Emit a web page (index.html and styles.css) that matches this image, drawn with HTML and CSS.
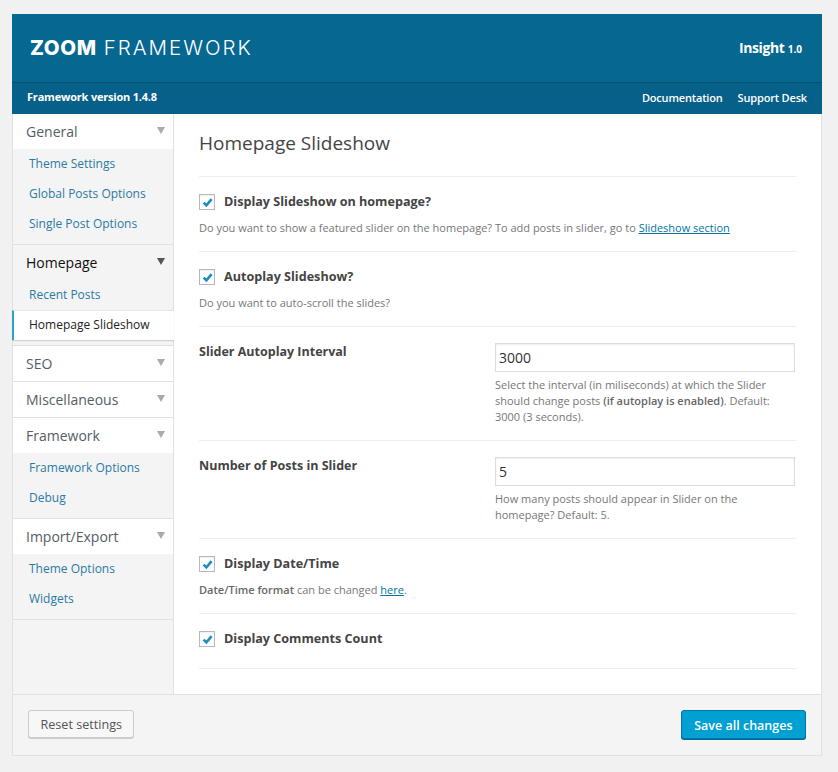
FILE: index.html
```html
<!DOCTYPE html>
<html lang="en">
<head>
<meta charset="utf-8">
<title>ZOOM Framework</title>
<link rel="stylesheet" href="styles.css">
</head>
<body>
<div class="panel">
  <header class="masthead">
    <div class="logo"><b>ZOOM</b> <span>FRAMEWORK</span></div>
    <div class="theme">Insight <small>1.0</small></div>
  </header>
  <div class="subbar">
    <span class="version">Framework version 1.4.8</span>
    <nav class="links"><a>Documentation</a><a>Support Desk</a></nav>
  </div>
  <div class="body">
    <aside class="side">
      <section class="group">
        <h3 class="ghead">General<i class="arrow"></i></h3>
        <ul class="sub">
          <li>Theme Settings</li>
          <li>Global Posts Options</li>
          <li>Single Post Options</li>
        </ul>
      </section>
      <section class="group open">
        <h3 class="ghead">Homepage<i class="arrow"></i></h3>
        <ul class="sub">
          <li>Recent Posts</li>
          <li class="current">Homepage Slideshow</li>
        </ul>
      </section>
      <section class="group"><h3 class="ghead">SEO<i class="arrow"></i></h3></section>
      <section class="group"><h3 class="ghead">Miscellaneous<i class="arrow"></i></h3></section>
      <section class="group">
        <h3 class="ghead">Framework<i class="arrow"></i></h3>
        <ul class="sub">
          <li>Framework Options</li>
          <li>Debug</li>
        </ul>
      </section>
      <section class="group">
        <h3 class="ghead">Import/Export<i class="arrow"></i></h3>
        <ul class="sub">
          <li>Theme Options</li>
          <li>Widgets</li>
        </ul>
      </section>
    </aside>
    <main class="main">
      <h2 class="title">Homepage Slideshow</h2>
      <div class="row check r1">
        <label class="cb"><span class="box"><svg viewBox="0 0 16 16" width="16" height="16"><path d="M4.6 8.6 7.4 11.4 12.6 5.2" fill="none" stroke="#1e8cbe" stroke-width="2.6"/></svg></span>Display Slideshow on homepage?</label>
        <p class="help">Do you want to show a featured slider on the homepage? To add posts in slider, go to <a class="link">Slideshow section</a></p>
      </div>
      <div class="row check r1">
        <label class="cb"><span class="box"><svg viewBox="0 0 16 16" width="16" height="16"><path d="M4.6 8.6 7.4 11.4 12.6 5.2" fill="none" stroke="#1e8cbe" stroke-width="2.6"/></svg></span>Autoplay Slideshow?</label>
        <p class="help">Do you want to auto-scroll the slides?</p>
      </div>
      <div class="row field r3">
        <label class="flabel">Slider Autoplay Interval</label>
        <div class="fctl">
          <input class="text" type="text" value="3000">
          <p class="help">Select the interval (in miliseconds) at which the Slider should change posts <b>(if autoplay is enabled)</b>. Default: 3000 (3 seconds).</p>
        </div>
      </div>
      <div class="row field r4">
        <label class="flabel">Number of Posts in Slider</label>
        <div class="fctl">
          <input class="text" type="text" value="5">
          <p class="help">How many posts should appear in Slider on the homepage? Default: 5.</p>
        </div>
      </div>
      <div class="row check r1">
        <label class="cb"><span class="box"><svg viewBox="0 0 16 16" width="16" height="16"><path d="M4.6 8.6 7.4 11.4 12.6 5.2" fill="none" stroke="#1e8cbe" stroke-width="2.6"/></svg></span>Display Date/Time</label>
        <p class="help"><b>Date/Time format</b> can be changed <a class="link">here</a>.</p>
      </div>
      <div class="row check r6">
        <label class="cb"><span class="box"><svg viewBox="0 0 16 16" width="16" height="16"><path d="M4.6 8.6 7.4 11.4 12.6 5.2" fill="none" stroke="#1e8cbe" stroke-width="2.6"/></svg></span>Display Comments Count</label>
      </div>
    </main>
  </div>
  <footer class="foot">
    <button class="btn" type="button">Reset settings</button>
    <button class="btn primary" type="button">Save all changes</button>
  </footer>
</div>
</body>
</html>
```
FILE: styles.css
```css
* { box-sizing: border-box; }
html, body { margin: 0; padding: 0; }
body {
  background: #f1f1f1;
  font-family: "Open Sans", "Noto Sans", sans-serif;
  color: #444;
  height: 772px;
  overflow: hidden;
  padding: 14px 16px 0 12px;
}
.panel {
  width: 810px;
  height: 742px;
  display: flex;
  flex-direction: column;
  background: #fff;
  border: 1px solid #e1e1e1;
  border-top: 0;
}
.masthead {
  height: 68px;
  margin: 0 -1px;
  background: #066791;
  color: #fff;
  display: flex;
  align-items: center;
  justify-content: space-between;
  padding: 0 20px 0 18px;
  flex: none;
}
.logo {
  font-family: Inter, "Liberation Sans", sans-serif;
  font-size: 20.5px;
  font-weight: 300;
  margin-top: -1px;
  display: flex;
  gap: 7px;
}
.logo b { font-weight: 800; letter-spacing: 0.6px; }
.logo span { letter-spacing: 2px; }
.theme { font-size: 14px; font-weight: 700; letter-spacing: -0.4px; margin-top: -2px; }
.theme small { font-size: 10px; font-weight: 700; letter-spacing: 0; }
.subbar {
  height: 32px;
  margin: 0 -1px;
  background: #066089;
  border-top: 1px solid #05506f;
  color: #fff;
  display: flex;
  align-items: center;
  justify-content: space-between;
  padding: 0 15px 4px;
  font-size: 11px;
  font-weight: 600;
  flex: none;
}
.version { font-weight: 700; letter-spacing: -0.2px; }
.links { display: flex; gap: 15px; margin-top: 1px; }
.links a { color: #fff; letter-spacing: -0.17px; }
.body { flex: 1; display: flex; min-height: 0; }
.side {
  width: 161px;
  flex: none;
  background: #f4f4f4;
  border-right: 1px solid #e1e1e1;
}
.group { background: #fff; border-bottom: 1px solid #e1e1e1; }
.ghead {
  margin: 0;
  height: 35px;
  padding: 8px 0 0 13px;
  font-size: 14px;
  line-height: 20px;
  font-weight: 400;
  color: #555d66;
  position: relative;
}
.arrow {
  position: absolute;
  right: 8px;
  top: 13px;
  width: 0;
  height: 0;
  border-left: 4px solid transparent;
  border-right: 4px solid transparent;
  border-top: 7px solid #aaa;
}
.open { background: #f4f4f4; }
.open .ghead { color: #111; }
.open .arrow { border-top-color: #555; }
.sub {
  list-style: none;
  margin: 0;
  padding: 0 0 5px;
  background: #f4f4f4;
}
.sub li {
  height: 30px;
  line-height: 30px;
  padding-left: 16px;
  font-size: 12px;
  color: #2a7ba3;
}
.sub li.current {
  margin: 0 -1px;
  padding-left: 15px;
  line-height: 28px;
  background: #fff;
  color: #222;
  border-left: 2px solid #2ea2cc;
  border-top: 1px solid #e5e5e5;
  box-shadow: 0 1px 1px rgba(0,0,0,.14);
  position: relative;
}
.main { flex: 1; padding: 0 25px; min-width: 0; }
.title {
  margin: 0;
  height: 63px;
  padding-top: 16px;
  font-size: 19px;
  line-height: 26px;
  font-weight: 400;
  color: #444;
  border-bottom: 1px solid #eee;
}
.row { border-bottom: 1px solid #eee; }
.r1 { height: 75px; padding-top: 16px; }
.r3 { height: 114px; padding-top: 16px; }
.r4 { height: 98px; padding-top: 16px; }
.r6 { height: 55px; padding-top: 16px; }
.cb {
  display: flex;
  align-items: flex-start;
  gap: 9px;
  height: 18px;
  font-size: 12.6px;
  font-weight: 700;
  line-height: 18px;
  color: #444;
}
.box {
  width: 16px;
  height: 16px;
  margin-top: 1px;
  border: 1px solid #b4b9be;
  background: #fff;
  flex: none;
  display: block;
  position: relative;
  box-shadow: inset 0 1px 2px rgba(0,0,0,.07);
}
.box svg { position: absolute; left: -1px; top: -1px; }
.help {
  margin: 9px 0 0;
  font-size: 11px;
  line-height: 16px;
  color: #777;
}
.help b { font-weight: 600; color: #666; }
.link { color: #0074a2; text-decoration: underline; }
.field { display: flex; }
.flabel {
  width: 296px;
  flex: none;
  font-size: 12.5px;
  font-weight: 700;
  line-height: 18px;
  color: #444;
}
.fctl { flex: 1; min-width: 0; }
.text {
  display: block;
  width: 300px;
  height: 29px;
  border: 1px solid #ddd;
  box-shadow: inset 0 1px 2px rgba(0,0,0,.07);
  background: #fff;
  padding: 0 3px;
  font: 400 14px "Open Sans", sans-serif;
  color: #333;
}
.field .help { margin-top: 5px; width: 285px; }
.foot {
  height: 61px;
  flex: none;
  background: #f4f4f4;
  border-top: 1px solid #e1e1e1;
  display: flex;
  justify-content: space-between;
  align-items: flex-start;
  padding: 15px 15px 0;
}
.btn {
  height: 28px;
  padding: 0 11.5px;
  border: 1px solid #ccc;
  border-radius: 3px;
  background: #f7f7f7;
  box-shadow: 0 1px 0 #ccc;
  font: 400 12.6px "Open Sans", sans-serif;
  color: #555;
}
.primary {
  height: 29px;
  padding: 1px 12.5px 0;
  background: #00a0d2;
  border-color: #0073aa;
  box-shadow: 0 1px 0 #006799;
  color: #fff;
  font-weight: 600;
  font-size: 12.5px;
}
```
